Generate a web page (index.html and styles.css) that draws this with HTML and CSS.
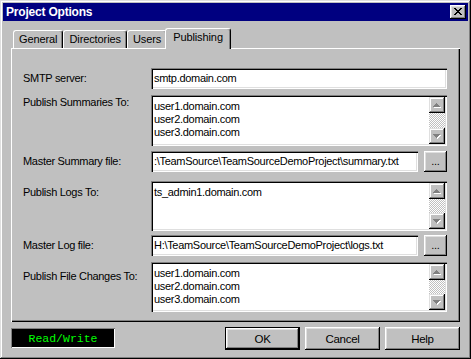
FILE: index.html
```html
<!DOCTYPE html>
<html>
<head>
<meta charset="utf-8">
<title>Project Options</title>
<link rel="stylesheet" href="styles.css">
</head>
<body>
<div class="window">
  <div class="titlebar">
    <span class="title">Project Options</span>
    <span class="close"><svg width="8" height="7" viewBox="0 0 8 7" shape-rendering="crispEdges"><path d="M0 0h2v1H0zM6 0h2v1H6zM1 1h2v1H1zM5 1h2v1H5zM2 2h4v1H2zM3 3h2v1H3zM2 4h4v1H2zM1 5h2v1H1zM5 5h2v1H5zM0 6h2v1H0zM6 6h2v1H6z" fill="#000"/></svg></span>
  </div>
  <div class="content">
    <div class="tabs">
      <div class="tab">General</div>
      <div class="tab">Directories</div>
      <div class="tab">Users</div>
      <div class="tab active">Publishing</div>
    </div>
    <div class="panel">
      <div class="row row-smtp">
        <div class="lbl">SMTP server:</div>
        <div class="edit">smtp.domain.com</div>
      </div>
      <div class="row row-sum">
        <div class="lbl top lbl-sum">Publish Summaries To:</div>
        <div class="list h51">
          <div class="items"><div>user1.domain.com</div><div>user2.domain.com</div><div>user3.domain.com</div></div>
          <div class="vscroll">
            <div class="sbtn"><svg width="8" height="5" viewBox="0 0 8 5" shape-rendering="crispEdges"><path d="M4 1h1v1h1v1h1v1h1v1H1V4h1V3h1V2h1z" fill="#fff"/><path d="M3 0h1v1h1v1h1v1h1v1H0V3h1V2h1V1h1z" fill="#808080"/></svg></div>
            <div class="track"></div>
            <div class="sbtn"><svg width="8" height="5" viewBox="0 0 8 5" shape-rendering="crispEdges"><path d="M1 1h7v1H7v1H6v1H5v1H4V4H3V3H2V2H1z" fill="#fff"/><path d="M0 0h7v1H6v1H5v1H4v1H3V3H2V2H1V1H0z" fill="#808080"/></svg></div>
          </div>
        </div>
      </div>
      <div class="row row-msum">
        <div class="lbl">Master Summary file:</div>
        <div class="edit">:\TeamSource\TeamSourceDemoProject\summary.txt</div>
        <div class="btn dots">...</div>
      </div>
      <div class="row row-logs">
        <div class="lbl top lbl-logs">Publish Logs To:</div>
        <div class="list h50">
          <div class="items"><div>ts_admin1.domain.com</div></div>
          <div class="vscroll">
            <div class="sbtn"><svg width="8" height="5" viewBox="0 0 8 5" shape-rendering="crispEdges"><path d="M4 1h1v1h1v1h1v1h1v1H1V4h1V3h1V2h1z" fill="#fff"/><path d="M3 0h1v1h1v1h1v1h1v1H0V3h1V2h1V1h1z" fill="#808080"/></svg></div>
            <div class="track"></div>
            <div class="sbtn"><svg width="8" height="5" viewBox="0 0 8 5" shape-rendering="crispEdges"><path d="M1 1h7v1H7v1H6v1H5v1H4V4H3V3H2V2H1z" fill="#fff"/><path d="M0 0h7v1H6v1H5v1H4v1H3V3H2V2H1V1H0z" fill="#808080"/></svg></div>
          </div>
        </div>
      </div>
      <div class="row row-mlog">
        <div class="lbl">Master Log file:</div>
        <div class="edit">H:\TeamSource\TeamSourceDemoProject\logs.txt</div>
        <div class="btn dots">...</div>
      </div>
      <div class="row row-chg">
        <div class="lbl top lbl-chg">Publish File Changes To:</div>
        <div class="list h50">
          <div class="items"><div>user1.domain.com</div><div>user2.domain.com</div><div>user3.domain.com</div></div>
          <div class="vscroll">
            <div class="sbtn"><svg width="8" height="5" viewBox="0 0 8 5" shape-rendering="crispEdges"><path d="M4 1h1v1h1v1h1v1h1v1H1V4h1V3h1V2h1z" fill="#fff"/><path d="M3 0h1v1h1v1h1v1h1v1H0V3h1V2h1V1h1z" fill="#808080"/></svg></div>
            <div class="track"></div>
            <div class="sbtn"><svg width="8" height="5" viewBox="0 0 8 5" shape-rendering="crispEdges"><path d="M1 1h7v1H7v1H6v1H5v1H4V4H3V3H2V2H1z" fill="#fff"/><path d="M0 0h7v1H6v1H5v1H4v1H3V3H2V2H1V1H0z" fill="#808080"/></svg></div>
          </div>
        </div>
      </div>
    </div>
    <div class="bottom">
      <div class="status">Read/Write</div>
      <div class="buttons">
        <div class="btn dlg default">OK</div>
        <div class="btn dlg">Cancel</div>
        <div class="btn dlg">Help</div>
      </div>
    </div>
  </div>
</div>
</body>
</html>
```

FILE: styles.css
```css
html, body {
  margin: 0;
  padding: 0;
  background: #c0c0c0;
}
body {
  font-family: "Liberation Sans", Arial, sans-serif;
  font-size: 11px;
  letter-spacing: -0.3px;
  color: #000;
}
.window {
  width: 471px;
  height: 359px;
  box-sizing: border-box;
  padding: 3px;
  background: #c0c0c0;
  box-shadow: inset -1px -1px #000, inset 1px 1px #dfdfdf, inset -2px -2px #808080, inset 2px 2px #fff;
  display: flex;
  flex-direction: column;
}
.titlebar {
  height: 18px;
  background: #000080;
  display: flex;
  align-items: center;
  justify-content: space-between;
  padding: 0 2px 0 3px;
}
.title {
  color: #fff;
  font-weight: bold;
  font-size: 12px;
  letter-spacing: -0.2px;
}
.close {
  width: 16px;
  height: 14px;
  box-sizing: border-box;
  background: #c0c0c0;
  box-shadow: inset -1px -1px #000, inset 1px 1px #fff, inset -2px -2px #808080, inset 2px 2px #dfdfdf;
  display: flex;
  align-items: center;
  justify-content: center;
  padding: 0 1px 1px 0;
}
.close svg { display: block; }
.content {
  padding: 7px 8px 0 8px;
}
.tabs {
  height: 20px;
  display: flex;
  align-items: flex-end;
  padding-left: 2px;
  position: relative;
  z-index: 1;
}
.tab {
  height: 18px;
  box-sizing: border-box;
  padding: 2px 5px 0 5px;
  background: #c0c0c0;
  border-top: 1px solid #fff;
  border-left: 1px solid #fff;
  border-right: 1px solid #000;
  border-radius: 3px 3px 0 0;
  box-shadow: inset -1px 0 #808080;
  line-height: 13px;
  letter-spacing: -0.1px;
}
.tab.active {
  height: 21px;
  margin: 0 -2px -1px -2px;
  padding: 2px 7px 0 7px;
  position: relative;
  z-index: 2;
}
.panel {
  width: 449px;
  height: 274px;
  box-sizing: border-box;
  padding: 20px 13px 0 12px;
  box-shadow: inset 1px 1px #fff, inset -1px -1px #000, inset -2px -2px #808080;
}
.row {
  display: flex;
}
.row-sum { margin-top: 6px; }
.row-msum { margin-top: 5px; }
.row-logs { margin-top: 9px; }
.row-mlog { margin-top: 4px; }
.row-chg { margin-top: 6px; }
.lbl {
  width: 128px;
  flex: none;
  display: flex;
  align-items: center;
  line-height: 13px;
}
.lbl.top { align-items: flex-start; }
.lbl-sum { padding-top: 1px; }
.lbl-logs { padding-top: 5px; }
.lbl-chg { padding-top: 8px; }
.edit {
  flex: 1;
  min-width: 0;
  height: 21px;
  box-sizing: border-box;
  background: #fff;
  box-shadow: inset 1px 1px #808080, inset 2px 2px #000, inset -1px -1px #fff, inset -2px -2px #dfdfdf;
  padding: 4px 3px 0 3px;
  line-height: 13px;
  white-space: nowrap;
  overflow: hidden;
}
.list {
  flex: 1;
  display: flex;
  box-sizing: border-box;
  background: #fff;
  box-shadow: inset 1px 1px #808080, inset 2px 2px #000, inset -1px -1px #fff, inset -2px -2px #dfdfdf;
  padding: 2px;
}
.h51 { height: 51px; }
.h50 { height: 50px; }
.items {
  flex: 1;
  padding: 3px 1px 0 1px;
  line-height: 13px;
}
.vscroll {
  width: 16px;
  display: flex;
  flex-direction: column;
}
.sbtn {
  height: 16px;
  flex: none;
  box-sizing: border-box;
  background: #c0c0c0;
  box-shadow: inset -1px -1px #000, inset 1px 1px #dfdfdf, inset -2px -2px #808080, inset 2px 2px #fff;
  display: flex;
  align-items: center;
  justify-content: center;
}
.sbtn svg { display: block; }
.track {
  flex: 1;
  background: repeating-conic-gradient(#c0c0c0 0 25%, #fff 0 50%) 0 0 / 2px 2px;
}
.btn {
  box-sizing: border-box;
  background: #c0c0c0;
  box-shadow: inset -1px -1px #000, inset 1px 1px #fff, inset -2px -2px #808080, inset 2px 2px #dfdfdf;
  display: flex;
  align-items: center;
  justify-content: center;
}
.dots {
  width: 23px;
  height: 21px;
  margin-left: 6px;
  flex: none;
  align-items: flex-end;
  padding-bottom: 5px;
  line-height: 11px;
}
.bottom {
  display: flex;
  justify-content: space-between;
  align-items: flex-start;
  margin-top: 5px;
}
.status {
  width: 104px;
  height: 20px;
  margin-top: 1px;
  box-sizing: border-box;
  background: #000;
  box-shadow: inset 1px 1px #808080, inset -1px -1px #fff;
  color: #00ff00;
  font-family: "Liberation Mono", "Courier New", monospace;
  font-size: 11.5px;
  letter-spacing: 0;
  display: flex;
  align-items: center;
  justify-content: center;
}
.buttons {
  display: flex;
  gap: 5px;
}
.dlg {
  width: 75px;
  height: 23px;
  font-size: 11.5px;
}
.dlg.default {
  box-shadow: inset 0 0 0 1px #000, inset -2px -2px #000, inset 2px 2px #fff, inset -3px -3px #808080, inset 3px 3px #dfdfdf;
}
```
